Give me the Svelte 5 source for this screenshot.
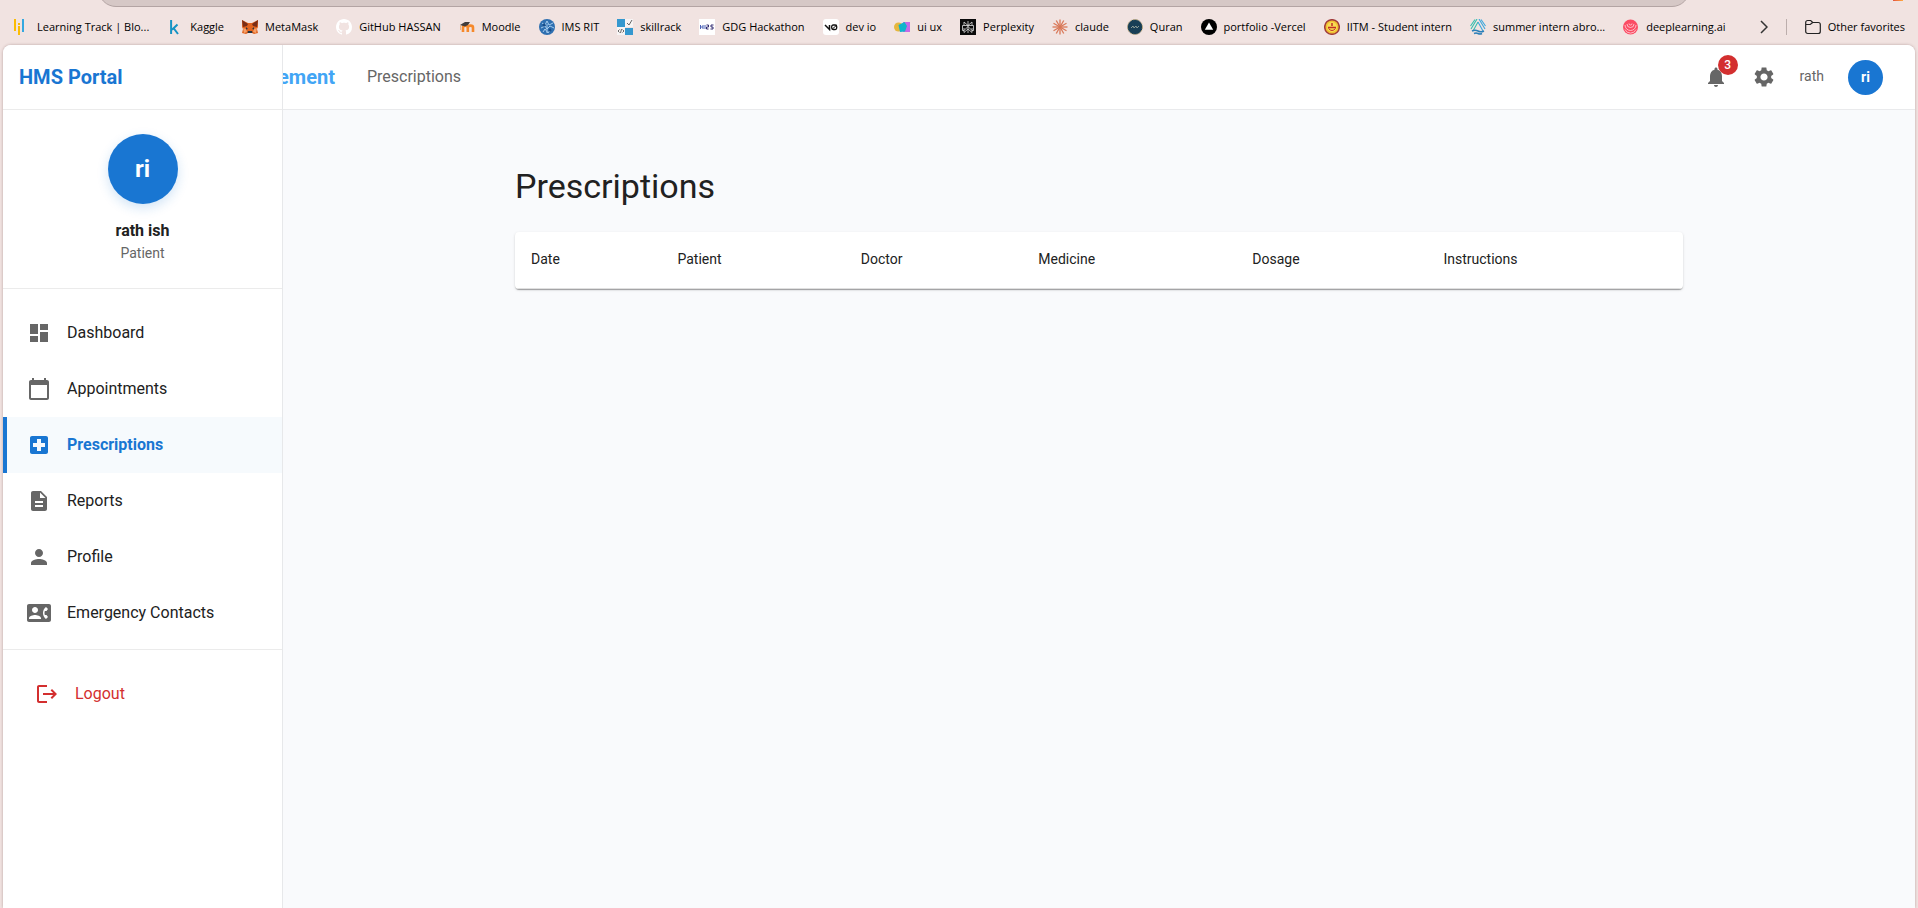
<script>
  const navItems = [
    { label: 'Dashboard', d: 'M3 13h8V3H3v10zm0 8h8v-6H3v6zm10 0h8V11h-8v10zm0-18v6h8V3h-8z' },
    { label: 'Appointments', d: 'M20 3h-1V1h-2v2H7V1H5v2H4c-1.1 0-2 .9-2 2v16c0 1.1.9 2 2 2h16c1.1 0 2-.9 2-2V5c0-1.1-.9-2-2-2zm0 18H4V8h16v13z' },
    { label: 'Prescriptions', active: true, d: 'M19 3H5c-1.1 0-1.99.9-1.99 2L3 19c0 1.1.9 2 2 2h14c1.1 0 2-.9 2-2V5c0-1.1-.9-2-2-2zm-1 11h-4v4h-4v-4H6v-4h4V6h4v4h4v4z' },
    { label: 'Reports', d: 'M14 2H6c-1.1 0-1.99.9-1.99 2L4 20c0 1.1.89 2 1.99 2H18c1.1 0 2-.9 2-2V8l-6-6zm2 16H8v-2h8v2zm0-4H8v-2h8v2zm-3-5V3.5L18.5 9H13z' },
    { label: 'Profile', d: 'M12 12c2.21 0 4-1.79 4-4s-1.79-4-4-4-4 1.79-4 4 1.79 4 4 4zm0 2c-2.67 0-8 1.34-8 4v2h16v-2c0-2.66-5.33-4-8-4z' },
    { label: 'Emergency Contacts', d: 'M22 3H2C.9 3 0 3.9 0 5v14c0 1.1.9 2 2 2h20c1.1 0 1.99-.9 1.99-2L24 5c0-1.1-.9-2-2-2zM8 6c1.66 0 3 1.34 3 3s-1.34 3-3 3-3-1.34-3-3 1.34-3 3-3zm6 12H2v-1c0-2 4-3.1 6-3.1s6 1.1 6 3.1v1zm3.85-4h1.64L21 16l-1.99 1.99c-1.31-.98-2.28-2.38-2.73-3.99-.18-.64-.28-1.31-.28-2s.1-1.36.28-2c.45-1.62 1.42-3.01 2.73-3.99L21 8l-1.51 2h-1.64c-.22.63-.35 1.3-.35 2s.13 1.37.35 2z' },
  ];
  const columns = ['Date', 'Patient', 'Doctor', 'Medicine', 'Dosage', 'Instructions'];
  const bookmarks = [
    { id: 'track', label: 'Learning Track | Blo...' },
    { id: 'kaggle', label: 'Kaggle' },
    { id: 'metamask', label: 'MetaMask' },
    { id: 'github', label: 'GitHub HASSAN' },
    { id: 'moodle', label: 'Moodle' },
    { id: 'ims', label: 'IMS RIT' },
    { id: 'skillrack', label: 'skillrack' },
    { id: 'gdg', label: 'GDG Hackathon' },
    { id: 'v0', label: 'dev io' },
    { id: 'uiux', label: 'ui ux' },
    { id: 'perplexity', label: 'Perplexity' },
    { id: 'claude', label: 'claude' },
    { id: 'quran', label: 'Quran' },
    { id: 'vercel', label: 'portfolio -Vercel' },
    { id: 'iitm', label: 'IITM - Student intern' },
    { id: 'summer', label: 'summer intern abro...' },
    { id: 'deep', label: 'deeplearning.ai' },
  ];
  const rays = [0, 30, 60, 90, 120, 150, 180, 210, 240, 270, 300, 330];
</script>

{#snippet favicon(id)}
  <svg class="fav" viewBox="0 0 16 16" aria-hidden="true">
    {#if id === 'track'}
      <path fill="#fbbc04" d="M0 0h2v12H0zM4 7h2v9H4zM4 4h2v2H4z" />
      <path fill="#34a8e0" d="M8 0h2v13H8z" />
    {:else if id === 'kaggle'}
      <path d="M4.100 1v14M10.500 5.500L5 10.700M6.500 9l4.500 6" fill="none" stroke="#1593c4" stroke-width="2" />
    {:else if id === 'metamask'}
      <path fill="#e2641f" d="M0 1l6 3h4l6-3v7l-1 2 1 4-4 1-2-1H6l-2 1-4-1 1-4-1-2z" />
      <path fill="#7a2d16" d="M0 1l6 4-1 2-4 1zM16 1l-6 4 1 2 4 1z" />
      <path fill="#f5a06a" d="M1 9l3 1 1 3-3 1zM15 9l-3 1-1 3 3 1z" />
      <path fill="#28343f" d="M4 8l2 2-2 .5zM12 8l-2 2 2 .5zM6 12h4l.5 2h-5z" />
    {:else if id === 'github'}
      <path fill="#fff" d="M8 0C3.580 0 0 3.580 0 8c0 3.540 2.290 6.530 5.470 7.590.4.07.55-.17.55-.38 0-.19-.01-.82-.01-1.490-2.010.37-2.530-.49-2.690-.94-.09-.23-.48-.94-.82-1.130-.28-.15-.68-.52-.01-.53.63-.01 1.080.58 1.230.82.72 1.210 1.870.87 2.330.66.07-.52.28-.87.51-1.070-1.780-.2-3.640-.89-3.640-3.950 0-.87.31-1.590.82-2.150-.08-.2-.36-1.020.08-2.120 0 0 .67-.21 2.200.82.64-.18 1.320-.27 2-.27s1.360.09 2 .27c1.530-1.040 2.200-.82 2.200-.82.44 1.100.16 1.920.08 2.120.51.56.82 1.270.82 2.150 0 3.070-1.870 3.750-3.650 3.950.29.25.54.73.54 1.480 0 1.070-.01 1.930-.01 2.200 0 .21.15.46.55.38A8.010 8.010 0 0 0 16 8c0-4.420-3.580-8-8-8z" />
    {:else if id === 'moodle'}
      <path d="M4 13V8.500C4 6 8.800 6 8.800 8.500V13M8.800 13V8.500C8.800 6 14 6 14 8.500V13" fill="none" stroke="#f6892b" stroke-width="2.600" />
      <path fill="#403c3b" d="M1 6l5-3h5L9 6 6 7.500z" />
      <path d="M1.500 6v5" stroke="#e8b48c" />
    {:else if id === 'ims'}
      <circle cx="8" cy="8" r="8" fill="#2e6fb0" />
      <path d="M3 4l3 2 2-4 2 4 4-2M2 9l4-2 2 3 3-3 4 2M4 13l2-3 3 4 3-4M8 5v9" fill="none" stroke="#a5cbed" />
      <circle cx="5" cy="6" r="1.500" fill="#184d88" /><circle cx="11" cy="11" r="1.500" fill="#184d88" />
    {:else if id === 'skillrack'}
      <path fill="#f7f4f4" d="M8 0h8v8H8zM0 8h8v8H0z" /><path fill="#3498cf" d="M0 0h8v8H0zM8 9h8v7H8z" />
      <path d="M10 4l2 2 3-5" fill="none" stroke="#666" /><path d="M2.500 10.500L1 12l1.500 1.500M3.500 14l1-4M5.500 10.500L7 12l-1.500 1.500" fill="none" stroke="#444" stroke-width=".8" />
    {:else if id === 'gdg'}
      <path fill="#fff" d="M0 0h16v16H0z" />
      <path d="M1.500 6v4M4 6v4M2 8h2M6 6v4" fill="none" stroke="#4a62b8" />
      <path d="M7.500 6h2v2h-2v2h2M14.500 6h-2.500v2h2v2h-2.500" fill="none" stroke="#302a70" />
    {:else if id === 'v0'}
      <rect width="16" height="16" rx="3" fill="#fff" />
      <path d="M2 6l4.500 4.500V6" fill="none" stroke="#111" stroke-width="1.500" />
      <rect x="8.700" y="6" width="5" height="4.500" rx="1.500" fill="none" stroke="#111" stroke-width="1.300" />
      <path d="M9 10.300l4.500-4" stroke="#111" />
    {:else if id === 'uiux'}
      <circle cx="4.500" cy="8" r="4.500" fill="#e6b73e" /><path fill="#c56ae8" d="M9 3h7v10H9z" /><path fill="#10b5cb" d="M4.500 6l6-3 2.500 4-2 5.500-5 .5z" />
    {:else if id === 'perplexity'}
      <path fill="#0b0b0b" d="M0 0h16v16H0z" />
      <path d="M8 2v12M4 3l4 3.500L12 3v3.500H4zM4 6.500H2.500v5H4l4-4 4 4h1.500v-5H12M4 9v4.500L8 10l4 3.500V9" fill="none" stroke="#ddd" stroke-width=".8" />
    {:else if id === 'claude'}
      {#each rays as a}
        <path d="M8 8V.5" stroke="#d97757" stroke-width="1.300" transform="rotate({a} 8 8)" />
      {/each}
    {:else if id === 'quran'}
      <circle cx="8" cy="8" r="7.500" fill="#183f56" stroke="#b9a67d" stroke-dasharray="2 1" /><path d="M4 9l2-2 1 2 2-2 1 2 2-2" stroke="#8b9a94" fill="none" />
    {:else if id === 'vercel'}
      <circle cx="8" cy="8" r="8" /><path fill="#fff" d="M8 3.500l4.200 7.300H3.800z" />
    {:else if id === 'iitm'}
      <circle cx="8" cy="8" r="7.300" fill="#f0bf32" stroke="#a13c3b" stroke-width="1.500" />
      <circle cx="8" cy="8" r="5" fill="#f7dc55" />
      <path d="M4 8.500h8M8 4v3" stroke="#c22c27" stroke-width="1.500" /><path d="M4.500 9.500q3.500 4 7 0" fill="none" stroke="#c22c27" />
    {:else if id === 'summer'}
      <path d="M7 0L1 10M5 .5L.5 7M8 3L3 12" stroke="#35bfae" stroke-width="1.100" /><path d="M9 0l6 10M11 .5L15.500 7M8 3l5 9" stroke="#3ca7dc" stroke-width="1.100" />
      <path d="M2 12q3-1.500 6 0t6 0M4 14.500q2-1 4 0t4 0" fill="none" stroke="#2c7fb8" stroke-width="1.500" />
    {:else}
      <circle cx="7.500" cy="8" r="7.500" fill="#fb4c64" />
      <path d="M2 6a5.500 5.500 0 0 0 11 0M4 5a3.500 3.500 0 0 0 7 0M6 4.500a1.500 1.500 0 0 0 3 0M2 10.500a6 6 0 0 0 11 0" fill="none" stroke="#ffd5da" stroke-width=".8" />
    {/if}
  </svg>
{/snippet}

<div class="browser">
  <div class="address"></div>
  <span class="extension"></span>
  <nav class="bookmarks" aria-label="Favorites">
    {#each bookmarks as b}
      <a href="#{b.id}">{@render favicon(b.id)}{b.label}</a>
    {/each}
    <button class="more" aria-label="More favorites">
      <svg width="8" height="14" viewBox="0 0 8 14"><path d="M1 1l6 6-6 6" fill="none" stroke="#333" stroke-width="1.500" /></svg>
    </button>
    <span class="sep"></span>
    <a href="#favorites"><svg class="fav" viewBox="0 0 16 16" aria-hidden="true"><path d="M.7 3.500c0-1.200.8-2 2-2h3l2 2h5.600c1.200 0 2 .8 2 2v7c0 1.200-.8 2-2 2H2.700c-1.200 0-2-.8-2-2zM.7 5.500h4.500l2.500-2" fill="none" stroke="#222" stroke-width="1.200" /></svg>Other favorites</a>
  </nav>

  <div class="page">
    <aside>
      <div class="brand">HMS Portal</div>
      <div class="profile">
        <div class="avatar big">ri</div>
        <strong>rath ish</strong>
        <span>Patient</span>
      </div>
      <nav class="menu" aria-label="Main">
        {#each navItems as item}
          <a href="#{item.label}" class:active={item.active}>
            <svg class="icon" viewBox="0 0 24 24" aria-hidden="true"><path d={item.d} /></svg>
            <span class="label">{item.label}</span>
          </a>
        {/each}
      </nav>
      <div class="foot">
        <button class="logout">
          <svg class="icon" viewBox="0 0 24 24" aria-hidden="true"><path d="m17 7-1.410 1.410L18.170 11H8v2h10.170l-2.580 2.580L17 17l5-5zM4 5h8V3H4c-1.100 0-2 .9-2 2v14c0 1.100.9 2 2 2h8v-2H4V5z" /></svg>
          <span class="label">Logout</span>
        </button>
      </div>
    </aside>

    <div class="content">
      <header>
        <span class="title">ement</span>
        <span class="crumb label">Prescriptions</span>
        <div class="actions">
          <button class="tool" aria-label="Notifications">
            <svg class="icon" viewBox="0 0 24 24"><path d="M12 22c1.100 0 2-.9 2-2h-4c0 1.100.89 2 2 2zm6-6v-5c0-3.070-1.640-5.640-4.500-6.320V4c0-.83-.67-1.500-1.500-1.500s-1.500.67-1.500 1.500v.68C7.630 5.360 6 7.920 6 11v5l-2 2v1h16v-1l-2-2z" /></svg>
            <span class="badge">3</span>
          </button>
          <button class="tool" aria-label="Settings">
            <svg class="icon" viewBox="0 0 24 24"><path d="M19.140 12.940c.04-.3.06-.61.06-.94 0-.32-.02-.64-.07-.94l2.030-1.580c.18-.14.23-.41.12-.61l-1.920-3.320c-.12-.22-.37-.29-.59-.22l-2.390.96c-.5-.38-1.030-.7-1.620-.94l-.36-2.540c-.04-.24-.24-.41-.48-.41h-3.840c-.24 0-.43.17-.47.41l-.36 2.540c-.59.24-1.130.57-1.620.94l-2.390-.96c-.22-.08-.47 0-.59.22L2.740 8.870c-.12.21-.08.47.12.61l2.030 1.580c-.05.3-.09.63-.09.94s.02.64.07.94l-2.030 1.580c-.18.14-.23.41-.12.61l1.920 3.320c.12.22.37.29.59.22l2.390-.96c.5.38 1.030.7 1.620.94l.36 2.540c.05.24.24.41.48.41h3.840c.24 0 .44-.17.47-.41l.36-2.540c.59-.24 1.130-.56 1.620-.94l2.390.96c.22.08.47 0 .59-.22l1.920-3.320c.12-.22.07-.47-.12-.61l-2.010-1.580zM12 15.600c-1.980 0-3.600-1.620-3.600-3.600s1.620-3.600 3.600-3.600 3.600 1.620 3.600 3.600-1.620 3.600-3.600 3.600z" /></svg>
          </button>
          <span class="user label">rath</span>
          <div class="avatar">ri</div>
        </div>
      </header>
      <main>
        <h1>Prescriptions</h1>
        <div class="paper">
          <table>
            <thead>
              <tr>{#each columns as c}<th scope="col">{c}</th>{/each}</tr>
            </thead>
          </table>
        </div>
      </main>
    </div>
  </div>
</div>

<style>
  :global(body) { margin: 0; background: #f1e3e1; }
  .browser {
    display: flex;
    flex-direction: column;
    height: 100vh;
    overflow: hidden;
    position: relative;
    background: #f1e3e1;
    font-family: Roboto, 'Liberation Sans', sans-serif;
  }
  .browser *, .browser *::before { box-sizing: border-box; }
  a { color: inherit; text-decoration: none; }
  button { border: 0; background: none; padding: 0; font: inherit; color: inherit; cursor: pointer; }
  .address {
    flex: none;
    height: 36px;
    margin: -29px 228px 0 98px;
    border: 1px solid #b3a4a3;
    border-radius: 18px;
    background: #d6c8c6;
  }
  .extension {
    position: absolute;
    top: 0;
    right: 15px;
    width: 10px;
    height: 1px;
    background: linear-gradient(90deg, #e5533d, #ffab40);
  }
  .bookmarks {
    flex: none;
    display: flex;
    align-items: center;
    gap: 18px;
    height: 38px;
    padding: 2px 13px 0 14px;
    font: 11px/16px 'Open Sans', 'Noto Sans', sans-serif;
    color: #000;
    white-space: nowrap;
  }
  .bookmarks a { display: flex; align-items: center; gap: 7px; }
  .fav { width: 16px; height: 16px; flex: none; }
  .more { display: flex; margin-left: auto; }
  .sep { width: 1px; height: 16px; background: #bcaeac; }
  .page {
    flex: 1;
    min-height: 0;
    display: flex;
    margin: 0 3px;
    overflow: hidden;
    border-radius: 8px 8px 0 0;
    background: #f9fafc;
    box-shadow: 0 0 3px rgba(80, 40, 40, .35);
  }
  aside {
    flex: none;
    width: 280px;
    border-right: 1px solid #e7e8ea;
    background: #fff;
    color: #212121;
  }
  .brand {
    display: flex;
    align-items: center;
    height: 65px;
    padding: 0 16px;
    border-bottom: 1px solid #ebebeb;
    font-size: 20px;
    font-weight: 700;
    color: #1976d2;
  }
  .profile {
    display: flex;
    flex-direction: column;
    align-items: center;
    height: 179px;
    padding-top: 24px;
    border-bottom: 1px solid #ebebeb;
    font-size: 14px;
    line-height: 20px;
    color: #666;
  }
  .profile strong { margin-top: 14px; font-size: 16px; line-height: 25px; color: #212121; }
  .avatar {
    display: grid;
    place-items: center;
    width: 35px;
    height: 35px;
    border-radius: 50%;
    background: #1976d2;
    color: #fff;
    font-size: 14px;
    font-weight: 700;
  }
  .avatar.big { width: 70px; height: 70px; font-size: 24px; box-shadow: 0 4px 12px rgba(25, 118, 210, .2); }
  .menu { padding: 16px 0 8px; border-bottom: 1px solid #ebebeb; font-size: 16px; }
  .menu a { display: flex; align-items: center; gap: 16px; height: 56px; padding-left: 20px; border-left: 4px solid transparent; }
  .menu .active { border-color: #1976d2; background: #f6fafd; color: #1976d2; font-weight: 700; }
  .label { padding-bottom: 2px; }
  .icon { width: 24px; height: 24px; flex: none; fill: #666; }
  .active .icon { fill: #1976d2; }
  .foot { padding: 16px; }
  .logout { display: flex; align-items: center; gap: 16px; width: 100%; height: 56px; padding-left: 16px; color: #d32f2f; font-size: 16px; }
  .logout .icon { fill: #d32f2f; }
  .content { flex: 1; min-width: 0; overflow: hidden; }
  header {
    display: flex;
    align-items: center;
    height: 65px;
    padding-right: 32px;
    border-bottom: 1px solid #e9eaec;
    background: #fff;
    color: #666;
  }
  .title { margin: 0 32px 0 -5px; font-size: 20px; font-weight: 700; color: #42a5f5; }
  .crumb { font-size: 16px; }
  .actions { display: flex; align-items: center; gap: 24px; margin-left: auto; }
  .tool { position: relative; display: flex; }
  .badge {
    position: absolute;
    top: -10px;
    left: 14px;
    width: 20px;
    height: 20px;
    border-radius: 50%;
    background: #d32f2f;
    color: #fff;
    font-size: 12px;
    font-weight: 500;
    line-height: 20px;
    text-align: center;
  }
  .user { font-size: 14px; }
  main { max-width: 1200px; margin: 0 auto; padding: 56px 16px; box-sizing: border-box; }
  h1 { margin: 0 0 26px; font-size: 34px; line-height: 40px; font-weight: 400; color: #212121; }
  .paper {
    overflow: hidden;
    border-radius: 4px;
    background: #fff;
    box-shadow: 0 2px 1px -1px rgba(0, 0, 0, .2), 0 1px 1px rgba(0, 0, 0, .14), 0 1px 3px rgba(0, 0, 0, .12);
  }
  table { width: 100%; border-collapse: collapse; }
  th { padding: 15px 16px 17px; border-bottom: 1px solid #e0e0e0; font-size: 14px; line-height: 24px; font-weight: 400; text-align: left; color: #212121; }
</style>
